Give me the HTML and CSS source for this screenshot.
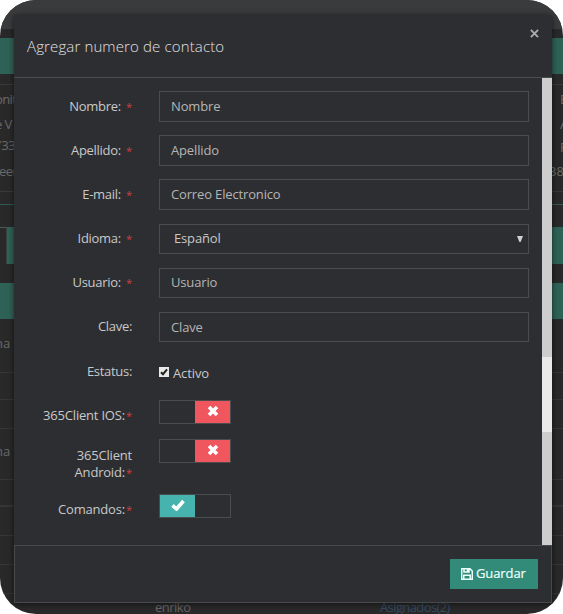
FILE: index.html
```html
<!DOCTYPE html>
<html lang="es">
<head>
<meta charset="utf-8">
<title>Agregar numero de contacto</title>
<link rel="stylesheet" href="styles.css">
</head>
<body>
<div class="screen">
  <div class="page">
    <div class="topbar"></div>
    <div class="space-s"></div>
    <div class="band"></div>
    <div class="space-m"></div>
    <div class="details">
      <div class="pair"><span class="pull">onit</span><span class="end">E</span></div>
      <div class="pair"><span class="pull">e V</span><span class="end">A</span></div>
      <div class="pair tight"><span class="pull more">733</span><span class="end">F</span></div>
      <div class="pair"><span class="pull less">eer</span><span class="end wide">38:</span></div>
    </div>
    <div class="rule"></div>
    <div class="tabs"><div class="tab"></div><div class="tabfill"></div></div>
    <div class="space-l"></div>
    <div class="band"></div>
    <div class="line h1">na</div>
    <div class="line h2"></div>
    <div class="line h3"></div>
    <div class="line h4">na</div>
    <div class="line h2 thick"></div>
    <div class="line h3"></div>
    <div class="line h3"></div>
    <div class="line h3"></div>
    <div class="last"><span>enriko</span><span class="link">Asignados(2)</span></div>
  </div>
  <div class="modal">
    <header class="head">
      <h1>Agregar numero de contacto</h1>
      <svg class="close" viewBox="0 0 8 8"><path d="M.8.8l6.4 6.4M7.2.8L.8 7.2"/></svg>
    </header>
    <div class="body">
      <form class="form">
        <div class="row"><label class="label">Nombre: <i>*</i></label><div class="field">Nombre</div></div>
        <div class="row"><label class="label">Apellido: <i>*</i></label><div class="field">Apellido</div></div>
        <div class="row"><label class="label">E-mail: <i>*</i></label><div class="field">Correo Electronico</div></div>
        <div class="row"><label class="label">Idioma: <i>*</i></label><div class="field short select">Español<svg class="arrow" viewBox="0 0 6 6"><path d="M0 0h6L3.6 6H2.4z"/></svg></div></div>
        <div class="row"><label class="label">Usuario: <i>*</i></label><div class="field short">Usuario</div></div>
        <div class="row"><label class="label">Clave:</label><div class="field short low">Clave</div></div>
        <div class="row status"><label class="label">Estatus:</label><div class="check"><svg viewBox="0 0 10 10"><path d="M2 5.2l2 2L8 2.3"/></svg>Activo</div></div>
        <div class="row r-ios"><label class="label snug">365Client IOS:<i>*</i></label><div class="toggle"><span></span><span class="off"><svg viewBox="0 0 12 12"><path d="M2 2l8 8M10 2l-8 8"/></svg></span></div></div>
        <div class="row r-android"><label class="label snug">365Client<br>Android:<i>*</i></label><div class="toggle"><span></span><span class="off"><svg viewBox="0 0 12 12"><path d="M2 2l8 8M10 2l-8 8"/></svg></span></div></div>
        <div class="row r-cmd"><label class="label snug">Comandos:<i>*</i></label><div class="toggle"><span class="on"><svg class="tick" viewBox="0 0 14 12"><path d="M1.5 6.4l4 3.6 7-8"/></svg></span><span></span></div></div>
      </form>
      <div class="scroll"><div class="thumb"></div></div>
    </div>
    <footer class="foot">
      <div class="save"><svg viewBox="0 0 12 12"><path d="M.7.7h8.2l2.4 2.4v8.2H.7zM3 .7v3.4h5V.7M2.8 11.3V7.2h6.4v4.1M6.5 1.5v1.8"/></svg>Guardar</div>
    </footer>
  </div>
</div>
</body>
</html>
```
FILE: styles.css
```css
* { box-sizing: border-box; }
body {
  margin: 0;
  background: #fff;
  font: 13px/17px "Open Sans", sans-serif;
}
.screen {
  position: relative;
  width: 563px;
  height: 614px;
  overflow: hidden;
  border-radius: 36px;
  background: #29292a;
}
.page { color: #6b6a67; }
.topbar { height: 29px; background: #3a3b3c; }
.space-s { height: 9px; }
.band { height: 36px; background: #2f6256; }
.space-m { height: 10px; }
.details {
  height: 108px;
  padding-top: 6px;
  border-top: 1px solid #3a3a3a;
  border-bottom: 1px solid #3a3a3a;
}
.pair { display: flex; justify-content: space-between; height: 25px; }
.pair.tight { height: 24px; margin-top: -2px; }
.pair.tight .pull { margin-top: -2px; }
.pull { margin-left: -5px; letter-spacing: -.6px; }
.pull.more { margin-left: -6px; letter-spacing: -.3px; }
.pull.less { margin-left: -1px; }
.end { width: 3px; white-space: nowrap; }
.end.wide { width: 14px; }
.rule { height: 13px; border-bottom: 1px solid #2f5a50; }
.tabs { display: flex; height: 59px; padding-top: 22px; }
.tab { width: 7px; border-top: 1px solid #4d5a57; border-right: 1px solid #3b4341; }
.tabfill { flex: 1; background: #2f6256; }
.space-l { height: 19px; }
.line { border-bottom: 1px solid #363636; text-indent: -5px; }
.h1 { height: 54px; padding-top: 16px; }
.h2 { height: 27px; }
.h3 { height: 29px; }
.h4 { height: 51px; padding-top: 14px; }
.thick { border-bottom-width: 2px; }
.last { display: flex; padding: 5px 0 0 155px; color: #666; }
.last span { flex: none; width: 225px; letter-spacing: -.6px; }
.last span:first-child { letter-spacing: -.5px; }
.last .link { width: auto; color: #344b62; }
.modal {
  position: absolute;
  left: 14px;
  top: 15px;
  width: 538px;
  height: 588px;
  display: flex;
  flex-direction: column;
  background: #2d2e32;
  color: #c9c9c9;
  box-shadow: 0 1px 6px rgba(0, 0, 0, .6);
}
.head {
  height: 63px;
  display: flex;
  justify-content: space-between;
  padding: 0 13px;
  border-bottom: 1px solid #4b4c4e;
}
h1 { margin: 21px 0 0; font-size: 15px; line-height: 21px; font-weight: 300; letter-spacing: .13px; color: #e0e0e0; }
.close { width: 9px; height: 9px; margin-top: 14px; fill: none; stroke: #aaa; stroke-width: 1.7; }
.body { display: flex; height: 467px; }
.form { flex: 1; padding: 13px 13px 0 0; }
.row { display: flex; height: 44px; }
.label { width: 119px; margin-right: 26px; padding: 7px 1px 0 0; text-align: right; letter-spacing: -.3px; }
.label i { margin-left: 2px; font-style: normal; font-size: 11px; letter-spacing: 0; color: #d63b41; }
.label.snug { letter-spacing: -.2px; }
.label.snug i { margin-left: 1px; }
.field {
  width: 370px;
  height: 31px;
  padding-left: 11px;
  border: 1px solid #4b4c4e;
  line-height: 28px;
  letter-spacing: -.15px;
  color: #b5b5b5;
}
.short { height: 30px; margin-top: 1px; line-height: 26px; }
.low { line-height: 28px; }
.select { display: flex; justify-content: space-between; padding: 0 5px 0 14px; color: #c9c9c9; }
.arrow { width: 6px; height: 6px; margin-top: 11px; fill: #d0d0d0; }
.status { height: 45px; }
.status .label { padding-top: 8px; }
.check { display: flex; padding-top: 10px; letter-spacing: -.1px; }
.check svg { width: 10px; height: 10px; margin: 2px 4px 0 0; background: #e8e8e8; fill: none; stroke: #222; stroke-width: 2; }
.toggle { display: flex; width: 72px; height: 24px; border: 1px solid #4b4c4e; }
.toggle span { width: 35px; }
.toggle svg { display: block; width: 12px; height: 12px; margin: 4px auto 0; fill: none; stroke: #fff; stroke-width: 3.6; }
.toggle .tick { width: 14px; }
.off { background: #f0565d; }
.on { background: #47b3ae; }
.r-ios { height: 39px; }
.r-android { height: 55px; }
.r-android .label { padding-top: 8px; }
.scroll { width: 10px; padding-top: 279px; background: #cdcdcd; }
.thumb { height: 75px; background: #eaeaea; }
.foot {
  flex: 1;
  display: flex;
  justify-content: flex-end;
  padding: 13px 13px 0;
  border: 1px solid #48494b;
}
.save {
  display: flex;
  align-items: center;
  width: 88px;
  height: 30px;
  padding: 0 0 1px 11px;
  background: #318b78;
  color: #eafff9;
  letter-spacing: -.1px;
  -webkit-text-stroke: .2px #eafff9;
}
.save svg { width: 12px; height: 12px; margin-right: 3px; fill: none; stroke: #eafff9; stroke-width: 1.5; }
```
